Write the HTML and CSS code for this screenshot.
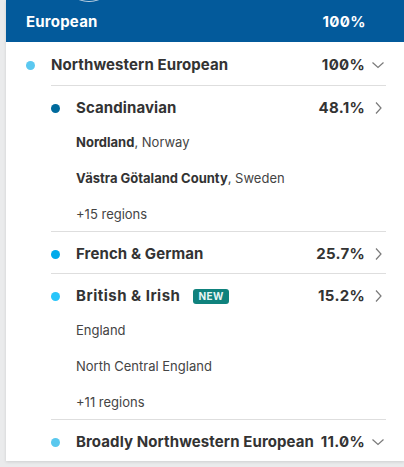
FILE: index.html
```html
<!DOCTYPE html>
<html>
<head>
<meta charset="utf-8">
<link rel="stylesheet" href="styles.css">
</head>
<body>
<div class="panel">
  <div class="avatar"></div>
  <div class="header">
    <span class="header-name">European</span>
    <span class="header-pct">100%</span>
  </div>
  <div class="row top">
    <span class="dot" style="background:#5bc8f0"></span>
    <span class="name">Northwestern European</span>
    <span class="pct">100%</span>
    <svg class="chev" width="14" height="14" viewBox="0 0 14 14"><path d="M1.5 4.5 L7 9.5 L12.5 4.5" fill="none" stroke="#7a7a7a" stroke-width="1.2"/></svg>
  </div>
  <div class="children">
    <div class="child">
      <div class="row">
        <span class="dot" style="background:#006a9c"></span>
        <span class="name">Scandinavian</span>
        <span class="pct">48.1%</span>
        <svg class="chev" width="14" height="14" viewBox="0 0 14 14"><path d="M5 1.5 L10 7 L5 12.5" fill="none" stroke="#7a7a7a" stroke-width="1.2"/></svg>
      </div>
      <div class="subs">
        <div class="sub"><b>Nordland</b>, Norway</div>
        <div class="sub"><b>Västra Götaland County</b>, Sweden</div>
        <div class="sub">+15 regions</div>
      </div>
    </div>
    <div class="child">
      <div class="row">
        <span class="dot" style="background:#00aaeb"></span>
        <span class="name">French &amp; German</span>
        <span class="pct">25.7%</span>
        <svg class="chev" width="14" height="14" viewBox="0 0 14 14"><path d="M5 1.5 L10 7 L5 12.5" fill="none" stroke="#7a7a7a" stroke-width="1.2"/></svg>
      </div>
    </div>
    <div class="child">
      <div class="row">
        <span class="dot" style="background:#29c5fa"></span>
        <span class="name wide">British &amp; Irish</span>
        <span class="badge">NEW</span>
        <span class="pct">15.2%</span>
        <svg class="chev" width="14" height="14" viewBox="0 0 14 14"><path d="M5 1.5 L10 7 L5 12.5" fill="none" stroke="#7a7a7a" stroke-width="1.2"/></svg>
      </div>
      <div class="subs">
        <div class="sub">England</div>
        <div class="sub">North Central England</div>
        <div class="sub">+11 regions</div>
      </div>
    </div>
    <div class="child">
      <div class="row">
        <span class="dot" style="background:#5ac8ee"></span>
        <span class="name">Broadly Northwestern European</span>
        <span class="pct">11.0%</span>
        <svg class="chev" width="14" height="14" viewBox="0 0 14 14"><path d="M1.5 4.5 L7 9.5 L12.5 4.5" fill="none" stroke="#7a7a7a" stroke-width="1.2"/></svg>
      </div>
    </div>
  </div>
</div>
</body>
</html>
```

FILE: styles.css
```css
html, body {
  margin: 0;
  padding: 0;
}
body {
  background: #eaebec;
  font-family: Inter, "Open Sans", "Liberation Sans", sans-serif;
  font-feature-settings: "zero" 1;
  color: #333;
  width: 404px;
  height: 467px;
  overflow: hidden;
}
.panel {
  position: relative;
  margin-left: 6px;
  background: #fff;
  box-shadow: 0 1px 3px rgba(0,0,0,0.12);
  overflow: hidden;
}
.avatar {
  position: absolute;
  left: 58px;
  top: -46px;
  width: 50px;
  height: 48px;
  border-radius: 50%;
  background: #035a9b;
  border-bottom: 1.5px solid rgba(225,232,240,0.85);
  box-sizing: border-box;
  z-index: 2;
}
.header {
  background: #035a9b;
  height: 42px;
  display: flex;
  align-items: center;
  padding: 0 38px 0 20px;
  color: #fff;
  font-weight: 700;
  font-size: 15px;
}
.header-name { flex: 1; letter-spacing: 0.2px; }
.header-pct { letter-spacing: 0.4px; }
.row {
  display: flex;
  align-items: center;
  padding: 12px 19px 9px 0;
  line-height: 20px;
}
.row.top {
  padding: 13px 19px 10px 20px;
}
.dot {
  width: 9px;
  height: 9px;
  border-radius: 50%;
  flex: none;
  margin-right: 16px;
}
.name {
  font-size: 15px;
  font-weight: 700;
  color: #333;
  letter-spacing: 0.1px;
}
.name.wide {
  letter-spacing: 0.5px;
}
.pct {
  margin-left: auto;
  font-size: 15px;
  font-weight: 700;
  color: #333;
  letter-spacing: 0.3px;
}
.chev {
  flex: none;
  margin-left: 6px;
}
.badge {
  margin-left: 13px;
  background: #0f827d;
  color: #e8f5f4;
  font-size: 10px;
  font-weight: 700;
  letter-spacing: 0.4px;
  line-height: 15px;
  padding: 0 5px;
  border-radius: 3px;
}
.children {
  margin: 0 18px 0 45px;
}
.child {
  border-top: 1px solid #dedede;
}
.child .row {
  padding-right: 1px;
}
.subs {
  margin-top: -3px;
  margin-bottom: -1px;
  padding-left: 25px;
}
.sub {
  font-size: 13px;
  line-height: 20px;
  padding: 8px 0;
  color: #444;
}
.sub b {
  font-weight: 700;
  color: #333;
}
```
